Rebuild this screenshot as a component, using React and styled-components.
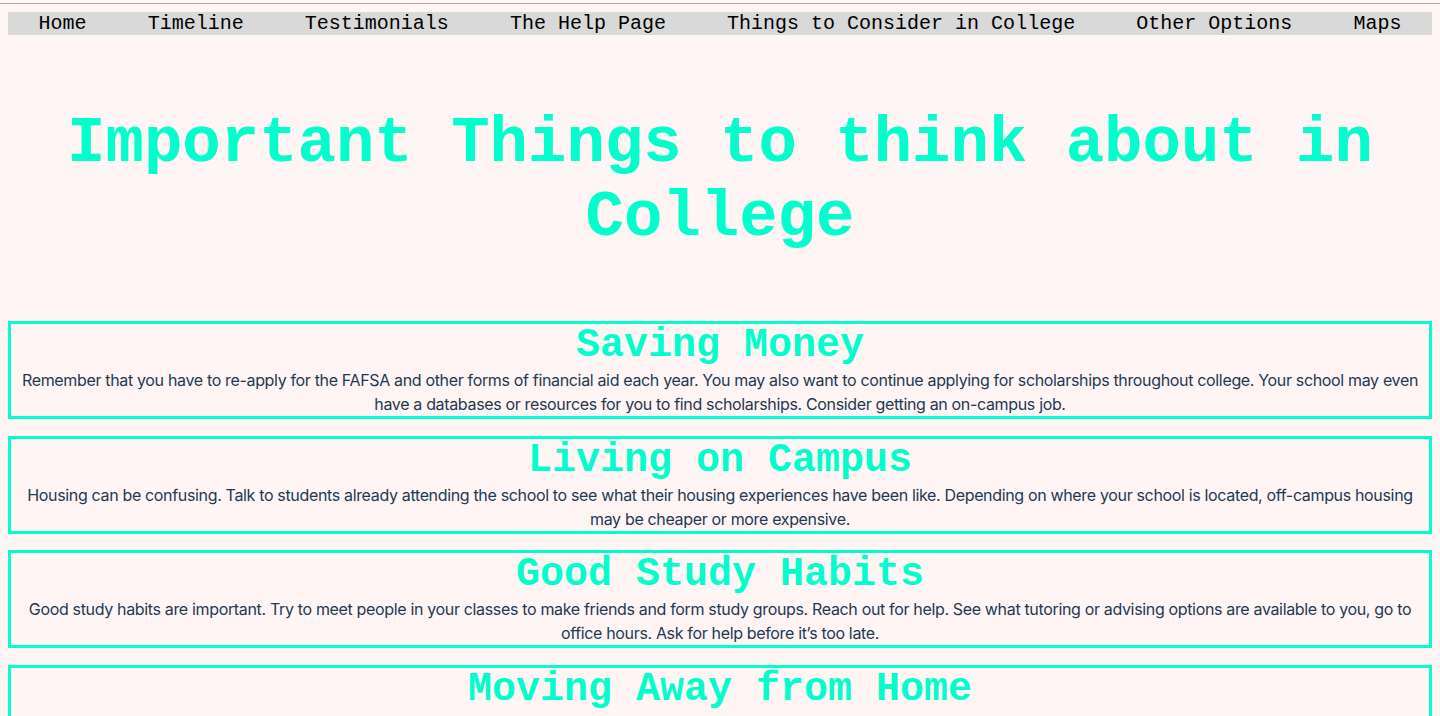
import React from "react";
import styled, { createGlobalStyle } from "styled-components";

const GlobalStyle = createGlobalStyle`
html {
    background: linear-gradient(#a9a9a9, #a9a9a9) 0 3px / 100% 1px no-repeat, #fff5f5;
}
body {
    margin: 12px 8px 8px 8px;
    background: transparent;
    font-family: "Liberation Mono", "Courier New", monospace;
}
`;

const links = [
    "Home",
    "Timeline",
    "Testimonials",
    "The Help Page",
    "Things to Consider in College",
    "Other Options",
    "Maps",
];

const topics = [
    {
        title: "Saving Money",
        text: "Remember that you have to re-apply for the FAFSA and other forms of financial aid each year. You may also want to continue applying for scholarships throughout college. Your school may even have a databases or resources for you to find scholarships. Consider getting an on-campus job.",
    },
    {
        title: "Living on Campus",
        text: "Housing can be confusing. Talk to students already attending the school to see what their housing experiences have been like. Depending on where your school is located, off-campus housing may be cheaper or more expensive.",
    },
    {
        title: "Good Study Habits",
        text: "Good study habits are important. Try to meet people in your classes to make friends and form study groups. Reach out for help. See what tutoring or advising options are available to you, go to office hours. Ask for help before it\u2019s too late.",
    },
    {
        title: "Moving Away from Home",
        text: "Moving away from home can be hard. Stay in touch with your family and friends, and find clubs or groups on campus where you can meet new people.",
    },
];

export default function App() {
    return (
        <>
            <GlobalStyle />
            <NavBar>
                {links.map((link) => (
                    <NavLink key={link} href="#">{link}</NavLink>
                ))}
            </NavBar>
            <Heading>Important Things to think about in College</Heading>
            <Topics>
                {topics.map((topic) => (
                    <TopicBox key={topic.title}>
                        <TopicTitle>{topic.title}</TopicTitle>
                        <TopicText>{topic.text}</TopicText>
                    </TopicBox>
                ))}
            </Topics>
        </>
    );
}

const NavBar = styled.nav`
display: flex;
justify-content: space-around;
background-color: #d9d9d9;
height: 23px;
align-items: center;
`;

const NavLink = styled.a`
font-family: "Liberation Mono", "Courier New", monospace;
font-size: 20px;
line-height: 23px;
color: #000;
text-decoration: none;
white-space: nowrap;
`;

const Heading = styled.h1`
margin: 72px 0 66px 0;
text-align: center;
font-family: "Liberation Mono", "Courier New", monospace;
font-size: 64px;
line-height: 74px;
font-weight: bold;
color: #00ffcc;
`;

const Topics = styled.div`
display: flex;
flex-direction: column;
gap: 16.67px;
`;

const TopicBox = styled.section`
border: 3px solid #00ffcc;
text-align: center;
`;

const TopicTitle = styled.h2`
margin: 0;
font-family: "Liberation Mono", "Courier New", monospace;
font-size: 40px;
line-height: 44px;
font-weight: bold;
color: #00ffcc;
`;

const TopicText = styled.p`
margin: 0;
padding: 0 4px;
font-family: Inter, "Noto Sans", sans-serif;
font-size: 16px;
line-height: 24px;
letter-spacing: -0.34px;
color: #213a54;
`;
